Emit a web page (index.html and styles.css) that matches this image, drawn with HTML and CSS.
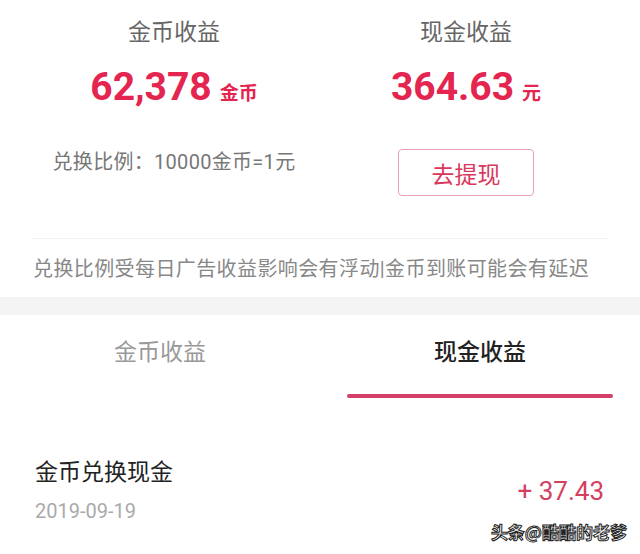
FILE: index.html
```html
<!DOCTYPE html>
<html lang="zh-CN">
<head>
    <meta charset="UTF-8">
    <meta name="viewport" content="width=device-width, initial-scale=1.0">
    <title>我的收益</title>
    <link rel="stylesheet" href="styles.css">
</head>
<body>
    <div class="summary">
        <div class="summary-col">
            <div class="summary-title">金币收益</div>
            <div class="amount">
                <span class="amount-num">62,378</span>
                <span class="amount-unit">金币</span>
            </div>
            <div class="ratio">兑换比例：10000金币=1元</div>
        </div>
        <div class="summary-col">
            <div class="summary-title">现金收益</div>
            <div class="amount">
                <span class="amount-num">364.63</span>
                <span class="amount-unit">元</span>
            </div>
            <button class="withdraw-btn">去提现</button>
        </div>
    </div>

    <div class="notice">兑换比例受每日广告收益影响会有浮动|金币到账可能会有延迟</div>
    <div class="divider"></div>

    <div class="tabs">
        <div class="tab">金币收益</div>
        <div class="tab active">现金收益</div>
    </div>

    <div class="record">
        <div class="record-info">
            <div class="record-title">金币兑换现金</div>
            <div class="record-date">2019-09-19</div>
        </div>
        <div class="record-amount">+ 37.43</div>
    </div>

    <div class="watermark">头条@酷酷的老爹</div>
</body>
</html>
```

FILE: styles.css
```css
body {
    margin: 0;
    background: #fff;
    font-family: Roboto, "Noto Sans CJK SC", sans-serif;
    color: #222;
    position: relative;
    height: 554px;
    overflow: hidden;
}
.summary {
    display: grid;
    grid-template-columns: 1fr 1fr;
    padding: 18px 28px 0;
}
.summary-col {
    display: flex;
    flex-direction: column;
    align-items: center;
}
.summary-title {
    font-size: 23px;
    line-height: 30px;
    color: #666;
}
.amount {
    margin-top: 16px;
    display: flex;
    align-items: baseline;
    gap: 8px;
    line-height: 46px;
}
.amount-num {
    font-size: 39px;
    font-weight: 700;
    color: #e3254f;
}
.amount-unit {
    font-size: 19px;
    font-weight: 700;
    color: #e3254f;
}
.ratio {
    margin-top: 31px;
    font-size: 20px;
    line-height: 28px;
    letter-spacing: 0.3px;
    color: #777;
}
.withdraw-btn {
    margin-top: 32px;
    width: 136px;
    height: 47px;
    background: #fff;
    border: 1px solid #e7a2b1;
    border-radius: 4px;
    font-family: "Noto Sans CJK SC", sans-serif;
    font-size: 23px;
    color: #d9385d;
    padding: 0;
}
.notice {
    margin: 42px 32px 0;
    border-top: 1px solid #f2f2f2;
    padding: 16px 0 14px 1px;
    font-size: 20px;
    line-height: 28px;
    letter-spacing: 0.4px;
    color: #888;
    white-space: nowrap;
}
.divider {
    height: 18px;
    background: #f4f4f4;
}
.tabs {
    display: grid;
    grid-template-columns: 1fr 1fr;
}
.tab {
    padding: 23px 27px 0;
    text-align: center;
    font-size: 23px;
    line-height: 30px;
    color: #999;
}
.tab.active {
    color: #222;
    font-weight: 500;
}
.tab.active::after {
    content: "";
    display: block;
    height: 4px;
    margin-top: 26px;
    border-radius: 2px;
    background: #d3416a;
}
.record {
    display: flex;
    align-items: center;
    justify-content: space-between;
    padding: 60px 36px 0 35px;
}
.record-title {
    font-size: 23px;
    line-height: 30px;
    color: #222;
}
.record-date {
    margin-top: 10px;
    font-size: 20px;
    line-height: 26px;
    color: #aaa;
}
.record-amount {
    font-size: 26px;
    color: #d2405f;
}
.watermark {
    position: absolute;
    right: 13px;
    bottom: 12px;
    font-family: "Noto Sans CJK SC", sans-serif;
    font-size: 17px;
    font-weight: 700;
    line-height: 20px;
    color: #fff;
    -webkit-text-stroke: 1px #222;
}
```
